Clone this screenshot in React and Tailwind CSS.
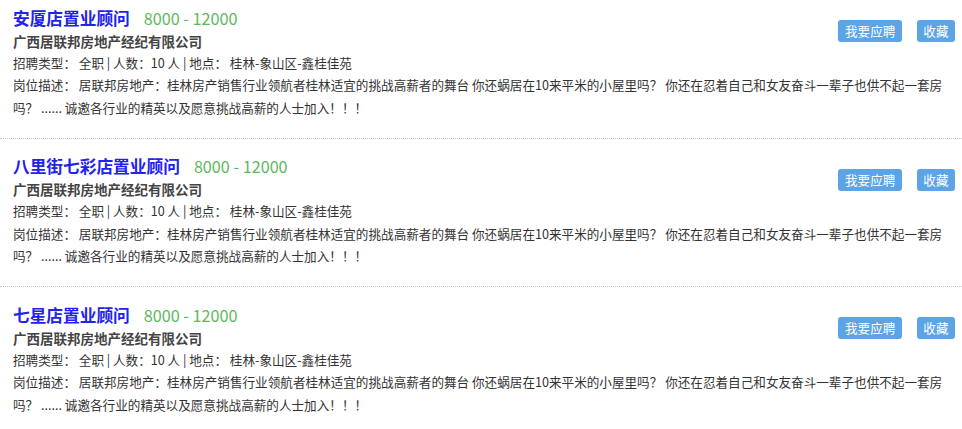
import React from "react";

const jobs = [
  { title: "安厦店置业顾问", first: true },
  { title: "八里街七彩店置业顾问" },
  { title: "七星店置业顾问" },
];

function Item({ title, first }) {
  return (
    <div
      className={`${first ? "pt-[5.5px]" : "pt-[15.5px]"} pb-[18.5px] pl-[13px] pr-[7px] border-b border-dotted border-[#c8c8c8]`}
    >
      <div className="flex justify-between">
        <div>
          <div className="flex items-center h-[24px]">
            <span className="text-[16.7px] font-bold text-[#2222ee] leading-[24px]">{title}</span>
            <span className="ml-[14px] text-[16.2px] text-[#5cb85c] leading-[24px]">8000 - 12000</span>
          </div>
          <div className="text-[13.5px] font-bold text-[#444] leading-[22px]">广西居联邦房地产经纪有限公司</div>
        </div>
        <div className="flex gap-[15px] mt-[14.5px] self-start">
          <button className="h-[22px] px-[6.5px] rounded-[3px] bg-[#5ca4e5] text-white text-[12.6px] leading-[22px]">我要应聘</button>
          <button className="h-[22px] px-[6.5px] rounded-[3px] bg-[#5ca4e5] text-white text-[12.6px] leading-[22px]">收藏</button>
        </div>
      </div>
      <div className="text-[12.6px] leading-[22.5px] text-[#333]">
        招聘类型： 全职 | 人数：10 人 | 地点： 桂林-象山区-鑫桂佳苑
      </div>
      <div className="text-[12.6px] leading-[22.5px] text-[#333]">
        岗位描述： 居联邦房地产：桂林房产销售行业领航者桂林适宜的挑战高薪者的舞台 你还蜗居在10来平米的小屋里吗？ 你还在忍着自己和女友奋斗一辈子也供不起一套房吗？ ...... 诚邀各行业的精英以及愿意挑战高薪的人士加入！！！
      </div>
    </div>
  );
}

export default function App() {
  return (
    <div
      className="w-[962px] h-[429px] overflow-hidden bg-white"
      style={{ fontFamily: "'Noto Sans CJK SC', 'Noto Sans', sans-serif" }}
    >
      {jobs.map((j, i) => (
        <Item key={i} {...j} />
      ))}
    </div>
  );
}
